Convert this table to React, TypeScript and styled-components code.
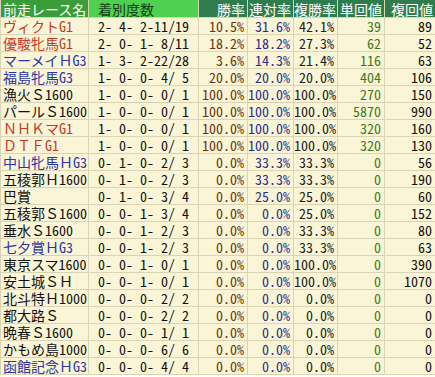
import React from 'react';
import styled, { createGlobalStyle } from 'styled-components';

const GlobalStyle = createGlobalStyle`
  html, body {
    margin: 0;
    padding: 0;
    background: #ffffff;
  }
`;

type Grade = 'g1' | 'g3' | undefined;

interface Row {
  name: string;
  record: string;
  win: string;
  place: string;
  show: string;
  winRet: string;
  showRet: string;
  grade?: Grade;
}

const rows: Row[] = [
  { name: 'ヴィクトG1', record: '2- 4- 2-11/19', win: '10.5%', place: '31.6%', show: '42.1%', winRet: '39', showRet: '89', grade: 'g1' },
  { name: '優駿牝馬G1', record: '2- 0- 1- 8/11', win: '18.2%', place: '18.2%', show: '27.3%', winRet: '62', showRet: '52', grade: 'g1' },
  { name: 'マーメイＨG3', record: '1- 3- 2-22/28', win: '3.6%', place: '14.3%', show: '21.4%', winRet: '116', showRet: '63', grade: 'g3' },
  { name: '福島牝馬G3', record: '1- 0- 0- 4/ 5', win: '20.0%', place: '20.0%', show: '20.0%', winRet: '404', showRet: '106', grade: 'g3' },
  { name: '漁火Ｓ1600', record: '1- 0- 0- 0/ 1', win: '100.0%', place: '100.0%', show: '100.0%', winRet: '270', showRet: '150' },
  { name: 'パールＳ1600', record: '1- 0- 0- 0/ 1', win: '100.0%', place: '100.0%', show: '100.0%', winRet: '5870', showRet: '990' },
  { name: 'ＮＨＫマG1', record: '1- 0- 0- 0/ 1', win: '100.0%', place: '100.0%', show: '100.0%', winRet: '320', showRet: '160', grade: 'g1' },
  { name: 'ＤＴＦG1', record: '1- 0- 0- 0/ 1', win: '100.0%', place: '100.0%', show: '100.0%', winRet: '320', showRet: '130', grade: 'g1' },
  { name: '中山牝馬ＨG3', record: '0- 1- 0- 2/ 3', win: '0.0%', place: '33.3%', show: '33.3%', winRet: '0', showRet: '56', grade: 'g3' },
  { name: '五稜郭Ｈ1600', record: '0- 1- 0- 2/ 3', win: '0.0%', place: '33.3%', show: '33.3%', winRet: '0', showRet: '190' },
  { name: '巴賞', record: '0- 1- 0- 3/ 4', win: '0.0%', place: '25.0%', show: '25.0%', winRet: '0', showRet: '60' },
  { name: '五稜郭Ｓ1600', record: '0- 0- 1- 3/ 4', win: '0.0%', place: '0.0%', show: '25.0%', winRet: '0', showRet: '152' },
  { name: '垂水Ｓ1600', record: '0- 0- 1- 2/ 3', win: '0.0%', place: '0.0%', show: '33.3%', winRet: '0', showRet: '80' },
  { name: '七夕賞ＨG3', record: '0- 0- 1- 2/ 3', win: '0.0%', place: '0.0%', show: '33.3%', winRet: '0', showRet: '63', grade: 'g3' },
  { name: '東京スマ1600', record: '0- 0- 1- 0/ 1', win: '0.0%', place: '0.0%', show: '100.0%', winRet: '0', showRet: '390' },
  { name: '安土城ＳＨ', record: '0- 0- 1- 0/ 1', win: '0.0%', place: '0.0%', show: '100.0%', winRet: '0', showRet: '1070' },
  { name: '北斗特Ｈ1000', record: '0- 0- 0- 2/ 2', win: '0.0%', place: '0.0%', show: '0.0%', winRet: '0', showRet: '0' },
  { name: '都大路Ｓ', record: '0- 0- 0- 2/ 2', win: '0.0%', place: '0.0%', show: '0.0%', winRet: '0', showRet: '0' },
  { name: '晩春Ｓ1600', record: '0- 0- 0- 1/ 1', win: '0.0%', place: '0.0%', show: '0.0%', winRet: '0', showRet: '0' },
  { name: 'かもめ島1000', record: '0- 0- 0- 6/ 6', win: '0.0%', place: '0.0%', show: '0.0%', winRet: '0', showRet: '0' },
  { name: '函館記念ＨG3', record: '0- 0- 0- 4/ 4', win: '0.0%', place: '0.0%', show: '0.0%', winRet: '0', showRet: '0', grade: 'g3' },
];

const gradeColor: Record<string, string> = {
  g1: '#c23b26',
  g3: '#2b35a3',
};

const colWidths = [88, 110, 49, 46, 44, 47, 51];

const Table = styled.table`
  width: 435px;
  table-layout: fixed;
  border-collapse: collapse;
  font-family: 'Noto Sans CJK JP', sans-serif;
  font-size: 14px;
  line-height: 16px;
`;

const Col = styled.col<{ $w: number }>`
  width: ${(p) => p.$w}px;
`;

// half-width ascii (digits, G, %, -, /) like a Windows gothic font
const Half = styled.span`
  font-feature-settings: 'hwid' 1;
`;

const HeadCell = styled.th<{ $bg: string; $fg: string; $align?: 'left' | 'right'; $indent?: number }>`
  height: 17px;
  padding: 0 ${(p) => (p.$align === 'left' ? '0' : '2px')} 0 ${(p) => (p.$align === 'left' ? `${p.$indent ?? 2}px` : '0')};
  background: ${(p) => p.$bg};
  color: ${(p) => p.$fg};
  font-weight: normal;
  text-align: ${(p) => p.$align || 'right'};
  white-space: nowrap;
  overflow: hidden;
  border: 1px solid #d9d4b4;
  border-top: none;
`;

const Cell = styled.td<{ $color?: string; $align?: 'left' | 'right' | 'center' }>`
  height: 16px;
  padding: 0 ${(p) => (p.$align === 'right' || !p.$align ? '3px' : '0')} 0 ${(p) => (p.$align === 'left' ? '2px' : '0')};
  background: #f9f5d6;
  color: ${(p) => p.$color || '#111111'};
  text-align: ${(p) => p.$align || 'right'};
  white-space: pre;
  overflow: hidden;
  border: 1px solid #d9d4b4;
`;

const NameText: React.FC<{ text: string }> = ({ text }) => {
  const parts = text.match(/[\x20-\x7e]+|[^\x20-\x7e]+/g) || [];
  return (
    <>
      {parts.map((p, i) => (/^[\x20-\x7e]+$/.test(p) ? <Half key={i}>{p}</Half> : <span key={i}>{p}</span>))}
    </>
  );
};

const App: React.FC = () => {
  return (
    <>
      <GlobalStyle />
      <Table>
        <colgroup>
          {colWidths.map((w, i) => (
            <Col key={i} $w={w} />
          ))}
        </colgroup>
        <thead>
          <tr>
            <HeadCell $bg="#3a9d3a" $fg="#ffffff" $align="left">前走レース名</HeadCell>
            <HeadCell $bg="#4fd04f" $fg="#143d14" $align="left" $indent={9}>着別度数</HeadCell>
            <HeadCell $bg="#2f7d4f" $fg="#ffffff">勝率</HeadCell>
            <HeadCell $bg="#2f7d4f" $fg="#ffffff">連対率</HeadCell>
            <HeadCell $bg="#2f7d4f" $fg="#ffffff">複勝率</HeadCell>
            <HeadCell $bg="#2f7d4f" $fg="#ffffff">単回値</HeadCell>
            <HeadCell $bg="#2f7d4f" $fg="#ffffff">複回値</HeadCell>
          </tr>
        </thead>
        <tbody>
          {rows.map((r) => (
            <tr key={r.name}>
              <Cell $align="left" $color={r.grade ? gradeColor[r.grade] : '#111111'}>
                <NameText text={r.name} />
              </Cell>
              <Cell $align="center"><Half>{r.record}</Half></Cell>
              <Cell $color="#6b3410"><Half>{r.win}</Half></Cell>
              <Cell $color="#2c2f86"><Half>{r.place}</Half></Cell>
              <Cell $color="#222222"><Half>{r.show}</Half></Cell>
              <Cell $color="#3d7a1c"><Half>{r.winRet}</Half></Cell>
              <Cell><Half>{r.showRet}</Half></Cell>
            </tr>
          ))}
        </tbody>
      </Table>
    </>
  );
};

export default App;
